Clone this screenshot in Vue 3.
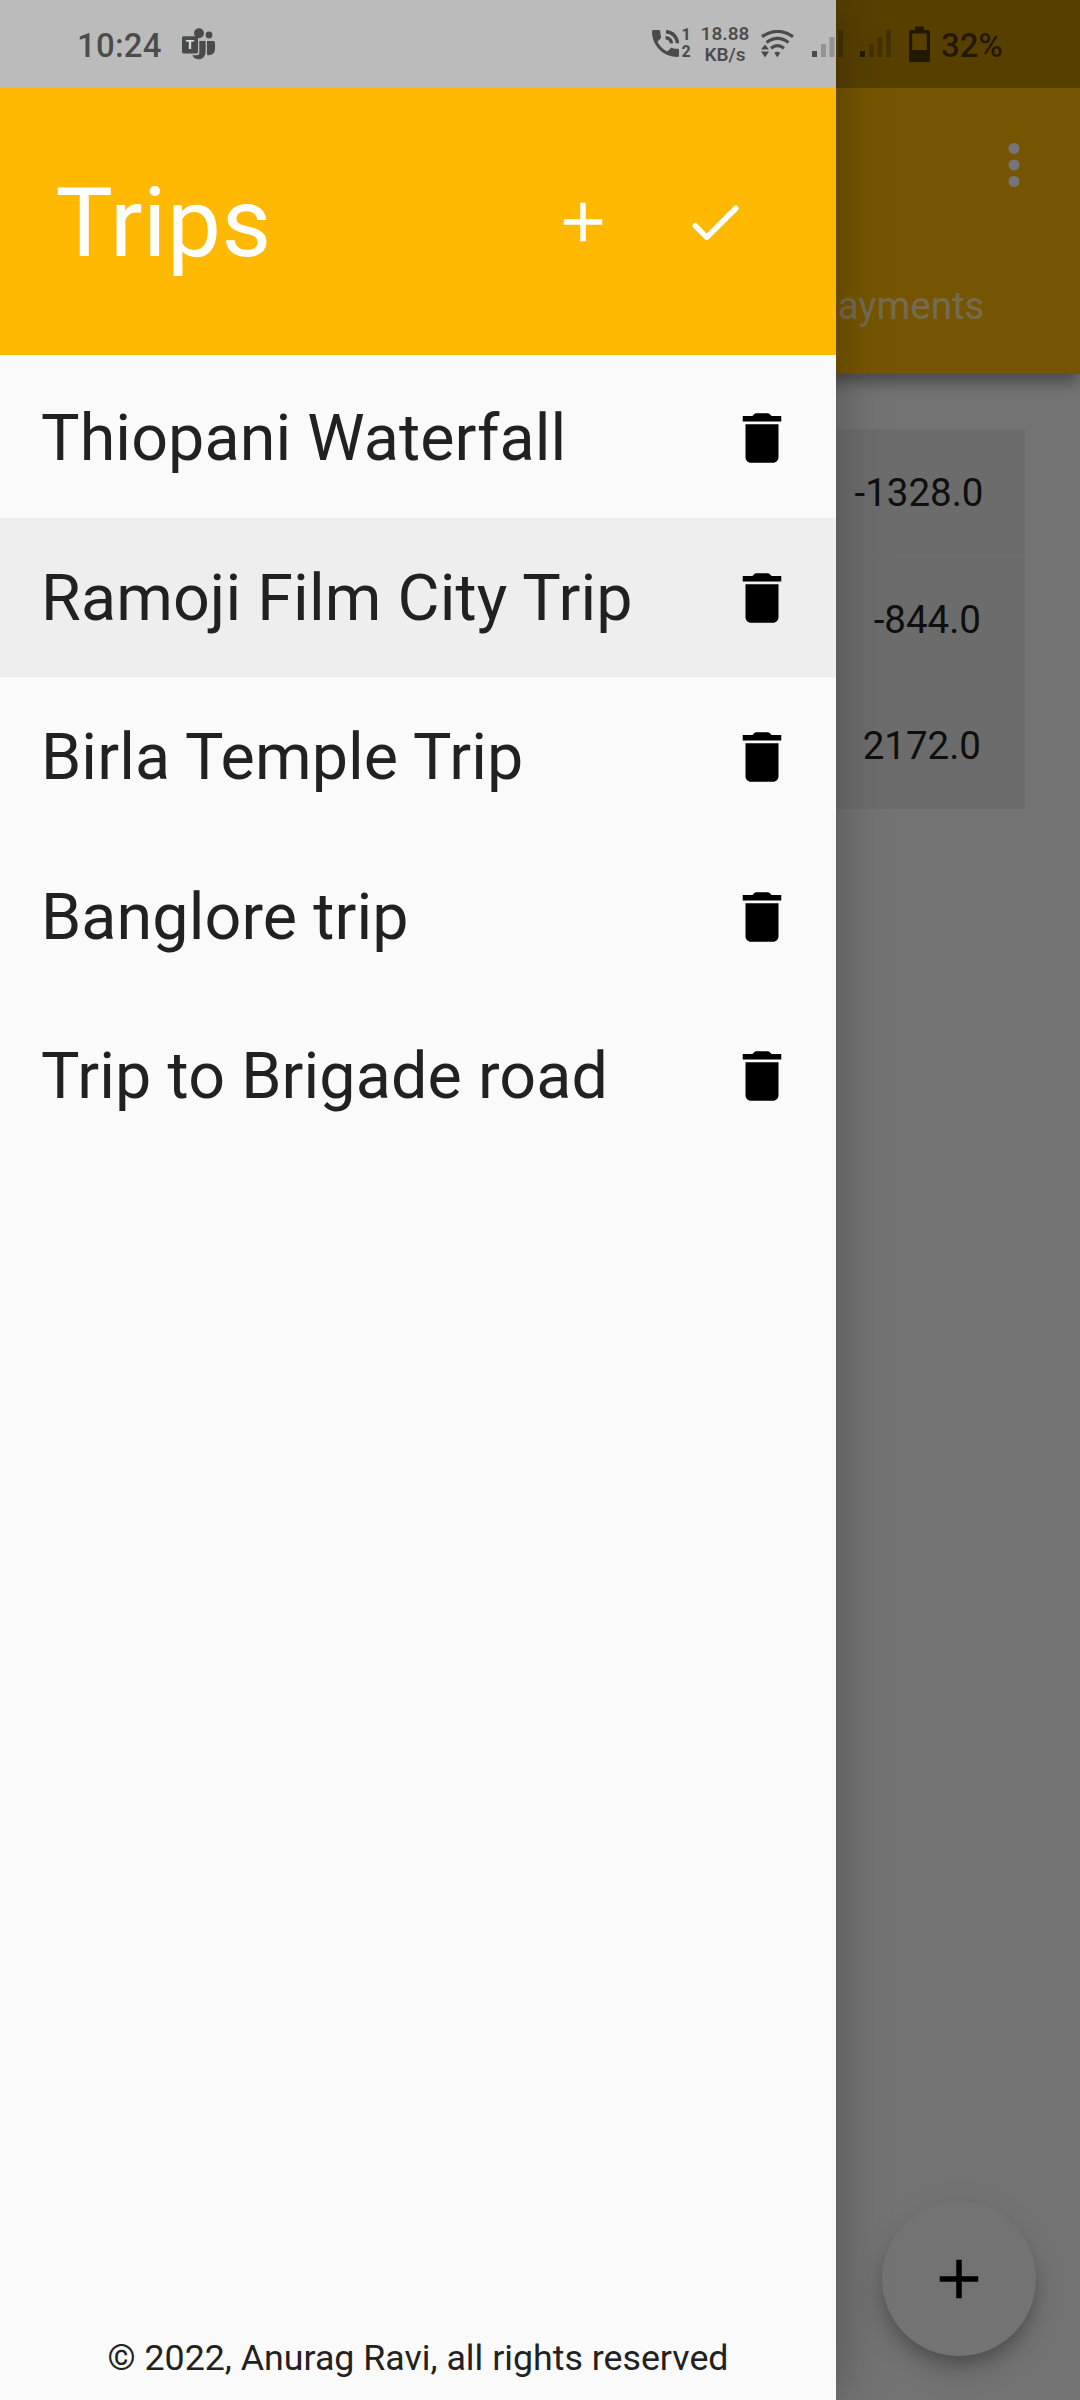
<script setup>
const trips = [
  { name: 'Thiopani Waterfall', selected: false },
  { name: 'Ramoji Film City Trip', selected: true },
  { name: 'Birla Temple Trip', selected: false },
  { name: 'Banglore trip', selected: false },
  { name: 'Trip to Brigade road', selected: false },
]

const balances = ['-1328.0', '-844.0', '2172.0']

const signalBars = [
  { x: 0, y: 21, h: 6, on: true },
  { x: 9, y: 14, h: 13, on: false },
  { x: 17.4, y: 7, h: 20, on: false },
  { x: 26, y: 0, h: 27, on: false },
]
</script>

<template>
  <div class="screen">
    <div class="page">
      <header class="appbar">
        <div class="toolbar">
          <svg class="icon" viewBox="0 0 24 24" fill="#fff">
            <circle cx="12" cy="6" r="2" />
            <circle cx="12" cy="12" r="2" />
            <circle cx="12" cy="18" r="2" />
          </svg>
        </div>
        <nav class="tabs"><span class="tab">Payments</span></nav>
      </header>
      <main class="table">
        <div v-for="value in balances" :key="value" class="table-row">{{ value }}</div>
      </main>
      <button class="fab" type="button" aria-label="Add">
        <svg class="icon" viewBox="0 0 24 24"><path d="M19 13h-6v6h-2v-6H5v-2h6V5h2v6h6v2z" /></svg>
      </button>
    </div>

    <div class="scrim"></div>

    <aside class="drawer">
      <div class="drawer-head">
        <h1 class="title">Trips</h1>
        <svg class="icon add" viewBox="0 0 24 24" fill="#fff"><path d="M19 13h-6v6h-2v-6H5v-2h6V5h2v6h6v2z" /></svg>
        <svg class="icon done" viewBox="0 0 24 24" fill="#fff">
          <path d="M9 16.17L5.53 12.7a.996.996 0 1 0-1.41 1.41l4.18 4.18c.39.39 1.02.39 1.41 0L20.29 7.71a.996.996 0 1 0-1.41-1.41L9 16.17z" />
        </svg>
      </div>
      <ul class="trip-list">
        <li v-for="trip in trips" :key="trip.name" class="trip" :class="{ selected: trip.selected }">
          <span class="trip-name">{{ trip.name }}</span>
          <svg class="icon" viewBox="0 0 24 24">
            <path d="M6 19c0 1.1.9 2 2 2h8c1.1 0 2-.9 2-2V7H6v12zM15.5 4l-.71-.71c-.18-.18-.44-.29-.7-.29H9.91c-.26 0-.52.11-.7.29L8.5 4H5v2h14V4z" />
          </svg>
        </li>
      </ul>
      <footer class="copyright">© 2022, Anurag Ravi, all rights reserved</footer>
    </aside>

    <div class="statusbar">
      <span class="clock">10:24</span>
      <svg class="teams" viewBox="0 0 33 32" width="33" height="32">
        <circle cx="17" cy="5.2" r="5" />
        <circle cx="27" cy="7" r="3.4" />
        <path d="M17.3 13H23.6V23.5C23.6 28.3 20.6 31.3 16.7 31.3C13.8 31.3 11.5 29.8 10.3 27.3H14.8Q17.3 27.3 17.3 24.8Z" />
        <path d="M25 13H31.3Q33 13 33 14.7V21C33 25 30 27.5 26 27.2Q24.7 27.2 25 25.5Z" />
        <rect x="0" y="8.2" width="16" height="17.2" rx="1.6" />
        <text x="8" y="21.3" text-anchor="middle" class="teams-letter">T</text>
      </svg>

      <svg class="call" viewBox="0 0 27 27" width="27" height="27">
        <path transform="scale(1.5) translate(-3 -3)" d="M20 15.5c-1.25 0-2.45-.2-3.57-.57-.35-.11-.74-.03-1.02.24l-2.2 2.2c-2.83-1.44-5.15-3.75-6.59-6.59l2.2-2.21c.28-.26.36-.65.25-1C8.7 6.45 8.5 5.25 8.5 4c0-.55-.45-1-1-1H4c-.55 0-1 .45-1 1 0 9.39 7.61 17 17 17 .55 0 1-.45 1-1v-3.5c0-.55-.45-1-1-1z" />
        <path d="M14 1.7A11.7 11.7 0 0 1 25.4 13.2M13.5 7.7A6 6 0 0 1 19.5 13.3" fill="none" stroke="#000" stroke-width="3.5" />
      </svg>
      <span class="sims"><b>1</b><b>2</b></span>
      <span class="speed"><b>18.88</b><b>KB/s</b></span>
      <svg class="wifi" viewBox="0 0 33 28" width="33" height="28">
        <g fill="none" stroke="#000" stroke-width="3.1">
          <path d="M1 6.6Q16.5 -4 32 6.6" />
          <path d="M5.5 12.4Q16.5 4.2 27.5 12.4" />
          <path d="M10 18.2Q16.5 12.9 23 18.2" />
        </g>
        <path d="M13.4 22.8Q16.3 20.8 19.2 22.8L16.3 27.5ZM4 14.5L8 19.6H0ZM4 27.5L0 21.5H8Z" />
      </svg>
      <svg v-for="sim in 2" :key="sim" class="signal" viewBox="0 0 31 27" width="31" height="27">
        <rect v-for="bar in signalBars" :key="bar.x" :x="bar.x" :y="bar.y" width="5" :height="bar.h" :opacity="bar.on ? 1 : 0.35" />
      </svg>
      <svg class="battery" viewBox="0 0 21 36" width="21" height="36">
        <path fill-rule="evenodd" d="M6 0.5H14.7V4H19.5Q21 4 21 5.5V34.5Q21 36 19.5 36H1.5Q0 36 0 34.5V5.5Q0 4 1.5 4H6ZM3.2 7.5V24H17.8V7.5Z" />
      </svg>
      <span class="percent">32%</span>
    </div>
  </div>
</template>

<style>
html,
body {
  margin: 0;
  background: #fafafa;
}
</style>

<style scoped>
.screen {
  position: relative;
  width: 1080px;
  height: 2400px;
  overflow: hidden;
  font-family: Roboto, 'Liberation Sans', sans-serif;
  color: #212121;
}
.icon {
  display: block;
  flex: none;
  width: 66px;
  height: 66px;
}
.page {
  width: 1080px;
  height: 2400px;
  background: #fafafa;
}
.appbar {
  box-sizing: border-box;
  height: 374px;
  padding-top: 88px;
  background: #ffb903;
  box-shadow: 0 11px 14px -3px rgba(0, 0, 0, 0.2), 0 8px 14px rgba(0, 0, 0, 0.13), 0 3px 20px rgba(0, 0, 0, 0.1);
}
.toolbar {
  display: flex;
  align-items: center;
  justify-content: flex-end;
  height: 154px;
  padding-right: 33px;
}
.tabs {
  display: flex;
  align-items: center;
  justify-content: flex-end;
  height: 132px;
  padding-right: 95.5px;
}
.tab {
  font-size: 38.5px;
  line-height: 44px;
  padding-bottom: 4px;
  color: rgba(255, 255, 255, 0.7);
}
.table {
  width: 970px;
  margin: 55px 55px 0;
  background: #ebebeb;
}
.table-row {
  box-sizing: border-box;
  height: 126.5px;
  padding: 1px 44px 0 0;
  font-size: 38.5px;
  line-height: 126.5px;
  text-align: right;
}
.table-row:first-child {
  padding-right: 41.5px;
  border-bottom: 1px solid #efefef;
}
.fab {
  position: absolute;
  right: 44px;
  bottom: 44px;
  display: flex;
  align-items: center;
  justify-content: center;
  width: 154px;
  height: 154px;
  padding: 0;
  border: 0;
  border-radius: 50%;
  background: #fafafa;
  box-shadow: 0 10px 14px -3px rgba(0, 0, 0, 0.18), 0 17px 28px rgba(0, 0, 0, 0.14), 0 3px 36px rgba(0, 0, 0, 0.05);
}
.scrim {
  position: absolute;
  inset: 0;
  background: rgba(0, 0, 0, 0.54);
}
.drawer {
  position: absolute;
  top: 0;
  left: 0;
  display: flex;
  flex-direction: column;
  box-sizing: border-box;
  width: 836px;
  height: 2400px;
  padding-top: 88px;
  background: #fafafa;
  box-shadow: 0 0 50px rgba(0, 0, 0, 0.27);
}
.drawer-head {
  display: flex;
  align-items: center;
  box-sizing: border-box;
  height: 267px;
  margin-bottom: 3.3px;
  padding: 0 88px 0 55.5px;
  background: #ffb903;
}
.title {
  flex: 1;
  margin: 0;
  padding-top: 2px;
  font-size: 96.25px;
  font-weight: 400;
  line-height: 112px;
  letter-spacing: 0.5px;
  color: #fff;
}
.done {
  margin-left: 66px;
}
.trip-list {
  margin: 0;
  padding: 0;
  list-style: none;
}
.trip {
  display: flex;
  align-items: center;
  justify-content: space-between;
  height: 159.5px;
  padding: 0 41.5px 0 41px;
}
.trip.selected {
  background: #eee;
}
.trip-name {
  font-size: 64.6px;
  line-height: 76px;
  letter-spacing: 0.1px;
  white-space: nowrap;
}
.copyright {
  margin-top: auto;
  padding-bottom: 21px;
  font-size: 35.75px;
  line-height: 42px;
  text-align: center;
}
.statusbar {
  position: absolute;
  top: 0;
  left: 0;
  display: flex;
  align-items: flex-start;
  box-sizing: border-box;
  width: 1080px;
  height: 88px;
  padding-left: 77px;
  background: rgba(0, 0, 0, 0.25);
  color: rgba(0, 0, 0, 0.6);
}
.statusbar svg {
  flex: none;
  opacity: 0.6;
}
.clock,
.percent {
  font-size: 33px;
  font-weight: 500;
  line-height: 40px;
  margin-top: 26px;
}
.clock {
  width: 105px;
  letter-spacing: 0.2px;
}
.teams {
  margin-top: 28px;
}
.teams-letter {
  font-size: 13.5px;
  font-weight: 700;
  fill: #fafafa;
}
.call {
  margin: 30px 0 0 437px;
}
.sims {
  display: flex;
  flex-direction: column;
  width: 18.5px;
  margin: 27px 0 0 2.5px;
  font-size: 16px;
  line-height: 16.5px;
}
.sims b {
  font-weight: 800;
}
.speed {
  display: flex;
  flex-direction: column;
  align-items: center;
  width: 50px;
  margin-top: 24px;
  font-size: 19px;
  line-height: 20.5px;
}
.speed b {
  font-weight: 600;
}
.wifi {
  margin: 29.5px 0 0 11px;
}
.signal {
  margin: 30px 0 0 17.5px;
}
.battery {
  margin: 26px 0 0 18px;
}
.percent {
  margin-left: 11px;
}
</style>
